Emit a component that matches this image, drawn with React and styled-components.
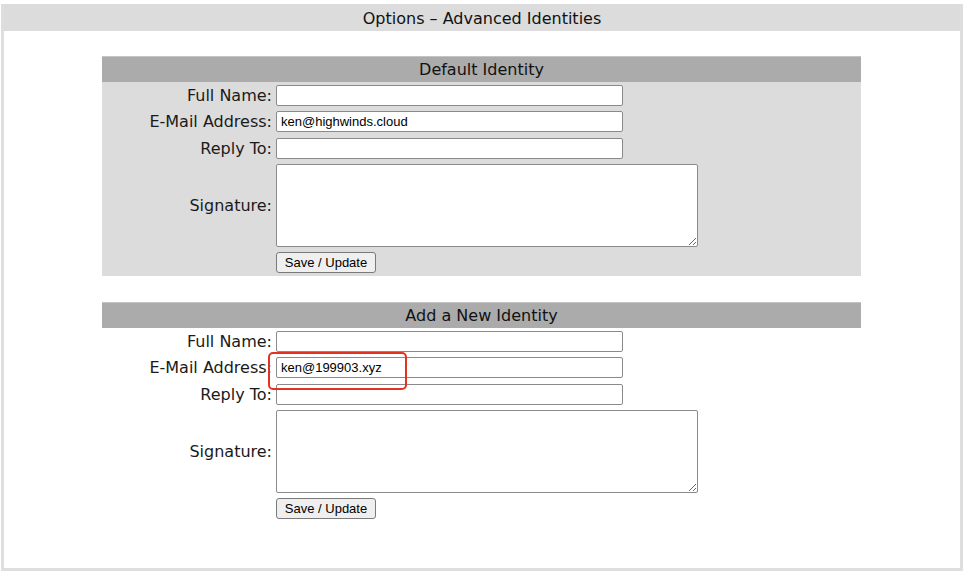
import styled, { createGlobalStyle } from "styled-components";

const GlobalStyle = createGlobalStyle`
  body {
    margin: 0;
    background: #fff;
    font-family: "DejaVu Sans", "Liberation Sans", sans-serif;
    color: #111;
  }
`;

export const Page = styled.div`
  padding: 4px 1px 0 1px;
  width: 963px;
`;

export const Frame = styled.div`
  width: 956px;
  height: 564px;
  border: 3px solid #dedede;
  border-top: 0;
`;

export const TitleBar = styled.div`
  height: 27px;
  padding-top: 1px;
  box-sizing: border-box;
  background: #dcdcdc;
  display: flex;
  align-items: center;
  justify-content: center;
  font-size: 16px;
  color: #111;
`;

export const Panel = styled.section`
  width: 759px;
  margin: 25px 0 0 98px;
  background: ${(props) => (props.shaded ? "#dcdcdc" : "#fff")};

  & + & {
    margin-top: 26px;
  }
`;

export const PanelHeader = styled.div`
  height: 26px;
  background: #ababab;
  border-top: 1px solid #c4c4c4;
  box-sizing: border-box;
  display: flex;
  align-items: center;
  justify-content: center;
  font-size: 16px;
  color: #111;
`;

export const Rows = styled.div`
  display: grid;
  grid-template-columns: 170px 1fr;
  column-gap: 4px;
  row-gap: 5.3px;
  padding: 3px 0 3px;
  align-items: center;
`;

export const Label = styled.label`
  text-align: right;
  font-size: 16px;
  color: #1a1a1a;
`;

export const Field = styled.div`
  position: relative;
  display: flex;
`;

export const TextInput = styled.input`
  width: 347px;
  height: 21px;
  box-sizing: border-box;
  border: 1px solid #8a8a8a;
  border-radius: 2px;
  padding: 0 4px;
  font-family: "Liberation Sans", Arial, sans-serif;
  font-size: 13px;
  color: #000;
  background: #fff;
  outline: none;
`;

export const TextArea = styled.textarea`
  width: 422px;
  height: 83px;
  box-sizing: border-box;
  border: 1px solid #8a8a8a;
  border-radius: 2px;
  background: #fff;
  font-family: "Liberation Mono", monospace;
  font-size: 13px;
  margin: 0;
`;

export const Button = styled.button`
  width: 100px;
  height: 21px;
  box-sizing: border-box;
  border: 1px solid #7a7a7a;
  border-radius: 3px;
  background: #efefef;
  font-family: "Liberation Sans", Arial, sans-serif;
  font-size: 13px;
  color: #000;
  padding: 0;
`;

export const Highlight = styled.span`
  position: absolute;
  z-index: 2;
  left: -8px;
  top: -5px;
  width: 139px;
  height: 38px;
  box-sizing: border-box;
  border: 2px solid #e3321f;
  border-radius: 5px;
  pointer-events: none;
`;

function IdentityForm({ title, shaded, email, highlight }) {
  return (
    <Panel shaded={shaded}>
      <PanelHeader>{title}</PanelHeader>
      <Rows>
        <Label>Full Name:</Label>
        <Field>
          <TextInput defaultValue="" />
        </Field>
        <Label>E-Mail Address:</Label>
        <Field>
          <TextInput defaultValue={email} />
          {highlight && <Highlight />}
        </Field>
        <Label>Reply To:</Label>
        <Field>
          <TextInput defaultValue="" />
        </Field>
        <Label>Signature:</Label>
        <Field>
          <TextArea />
        </Field>
        <span />
        <Field>
          <Button>Save / Update</Button>
        </Field>
      </Rows>
    </Panel>
  );
}

function App() {
  return (
    <Page>
      <GlobalStyle />
      <Frame>
        <TitleBar>Options – Advanced Identities</TitleBar>
        <IdentityForm title="Default Identity" shaded email="ken@highwinds.cloud" />
        <IdentityForm title="Add a New Identity" email="ken@199903.xyz" highlight />
      </Frame>
    </Page>
  );
}

export default App;
